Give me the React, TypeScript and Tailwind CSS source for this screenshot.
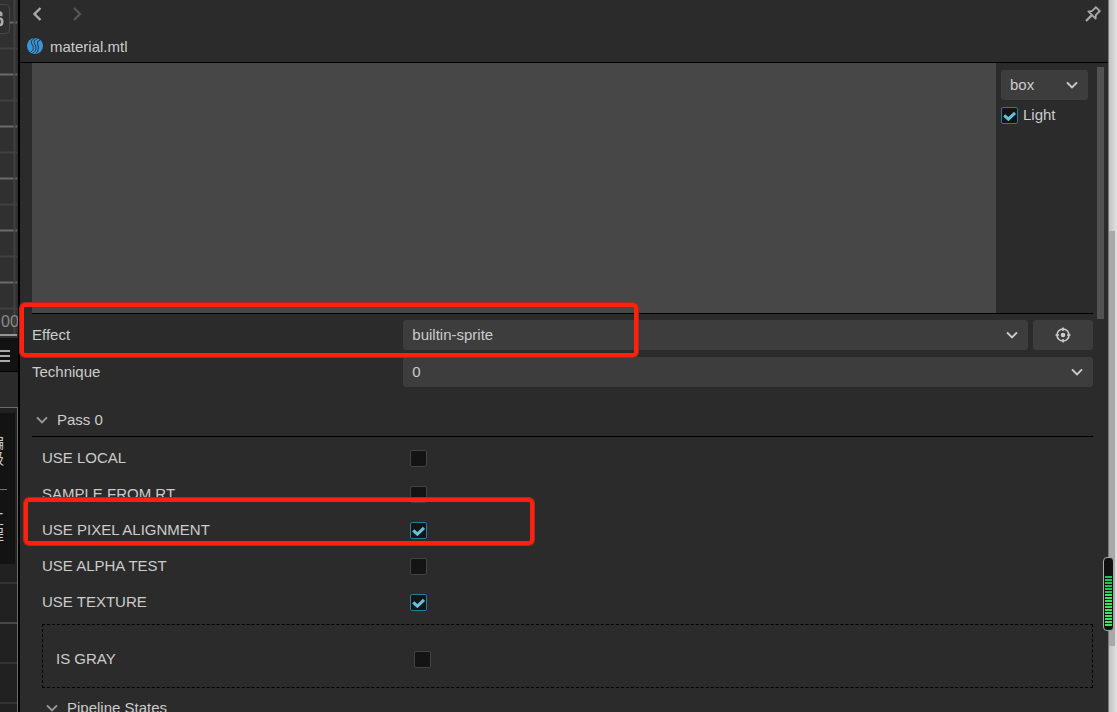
import type { ReactNode } from "react";

const outline =
  "absolute pointer-events-none border-4 border-[#ff2010] rounded-[5px] shadow-[0_0_0_1px_#a8281d]";

function Chevron({ className = "" }: { className?: string }) {
  return (
    <svg viewBox="0 0 12 8" className={`w-3 h-2 shrink-0 fill-none ${className}`} stroke="currentColor" strokeWidth="2">
      <path d="M1 1.4 6 6.4 11 1.4" />
    </svg>
  );
}

function CheckBox({ id, checked = false }: { id: string; checked?: boolean }) {
  return (
    <span className="relative flex w-[17px] h-[17px] shrink-0">
      <input
        id={id}
        type="checkbox"
        defaultChecked={checked}
        className="peer appearance-none w-full h-full rounded-xs border border-[#434343] bg-[#141414] checked:border-[#227f9b]"
      />
      <svg
        viewBox="0 0 17 17"
        className="absolute inset-0 hidden peer-checked:block pointer-events-none fill-none"
        stroke="#67bfdc"
        strokeWidth="3"
      >
        <path d="M3.2 8.4 7.4 12.2 14 5.8" />
      </svg>
    </span>
  );
}

function Select({ id, value, label, className = "" }: { id: string; value: string; label?: string; className?: string }) {
  return (
    <div className={`relative flex items-center ${className}`}>
      <select
        id={id}
        aria-label={label}
        className="appearance-none w-full h-[30px] rounded-[3px] bg-[#3d3d3d] pl-[9px] pr-8 text-[#ccc]"
      >
        <option>{value}</option>
      </select>
      <Chevron className="absolute right-[10px] pointer-events-none text-[#ccc]" />
    </div>
  );
}

function Row({ id, label, children }: { id: string; label: string; children: ReactNode }) {
  return (
    <div className="flex items-center">
      <label htmlFor={id} className="w-[35%] shrink-0">{label}</label>
      {children}
    </div>
  );
}

// Edge of the scene and timeline panels left of the inspector
function SceneEdge() {
  return (
    <aside className="flex flex-col w-5 shrink-0 h-full overflow-hidden border-r-2 border-black bg-[#2b2b2b]">
      <div className="relative h-[338px] shrink-0 bg-[#303030]">
        <svg className="w-full h-full" aria-hidden="true">
          {[48, 100, 152, 204, 256, 308].map((y) => (
            <path key={y} d={`M0 ${y + 0.5}H17`} stroke="#414141" strokeWidth="2" />
          ))}
          {[22, 74, 126, 178, 230, 282].map((y) => (
            <path key={y} d={`M0 ${y + 0.5}H17`} stroke="#6b6b6b" strokeWidth="2" />
          ))}
          <path d="M14.5 0V336" stroke="#414141" strokeWidth="2" />
          <path d="M0 335H17" stroke="#969696" strokeWidth="2" />
          <rect x="-20" y="4.5" width="29.5" height="29" rx="4" fill="#2e2e2e" stroke="#484848" />
          <path d="M-3 12.5H0C1.5 13 1.5 14.500 1 16M-4 18.5H0C3 18.5 3 25 0 25H-4" stroke="#aaa" strokeWidth="2.6" fill="none" />
        </svg>
        <span className="absolute left-px top-[312px] text-base leading-5 text-[#8a8a8a]">00</span>
      </div>
      <div className="flex items-center h-[34px] shrink-0 bg-[#121212] border-b border-black">
        <svg viewBox="0 0 18 14" className="w-[18px] h-[14px]" stroke="#aaa" strokeWidth="2">
          <path d="M0 3H10M0 8H10M0 13H10" />
        </svg>
      </div>
      <div className="grow mt-[35px] border-t border-r border-[#6b6b6b] bg-[#212121]">
        <div className="flex flex-col mt-[5px] mr-0.5 h-[151px] overflow-hidden bg-[#131313] font-['Liberation_Sans','Noto_Sans_CJK_SC',sans-serif] text-[15px] leading-4 text-[#ccc]">
          <div className="flex flex-col justify-center h-[76px] -ml-[11px] w-[15px]">
            <span>编</span>
            <span>级</span>
          </div>
          <div className="w-[7px] border-t border-[#777]" />
          <div className="flex flex-col justify-center h-[74px] -ml-[11px] w-[15px]">
            <span>工</span>
            <span>程</span>
          </div>
        </div>
        <div className="h-5 border-b-2 border-[#333]" />
        <div className="h-10 border-b-2 border-[#484848]" />
        <div className="h-10 border-b-2 border-[#333]" />
        <div className="h-10 border-b-2 border-[#333]" />
      </div>
    </aside>
  );
}

// Page scrollbar with the level meter floating over it
function PageScroll() {
  return (
    <div className="relative w-[9px] shrink-0 h-full border-l border-[#777] bg-linear-to-r from-[#c2c2c2] to-[#e2e2e2]">
      <div className="mt-[231px] w-1.5 h-[415px] bg-[#a9a9a9]" />
      <div className="absolute -left-[6px] top-[557px] w-[11px] h-[74px] rounded-[4px] border border-[#aaa] bg-[#111] px-px pt-[18px] pb-0.5">
        <svg viewBox="0 0 8 52" preserveAspectRatio="none" className="w-full h-full">
          {Array.from({ length: 17 }, (_, i) => (
            <rect key={i} y={i * 3} width="8" height="2" fill={i < 6 ? "#19c75c" : "#3fe25e"} />
          ))}
        </svg>
      </div>
    </div>
  );
}

const flags = [
  { id: "local", label: "USE LOCAL", checked: false },
  { id: "sample", label: "SAMPLE FROM RT", checked: false },
  { id: "pixel", label: "USE PIXEL ALIGNMENT", checked: true },
  { id: "alpha", label: "USE ALPHA TEST", checked: false },
  { id: "texture", label: "USE TEXTURE", checked: true },
];

export default function App() {
  return (
    <div className="relative flex h-screen overflow-hidden bg-[#2b2b2b] font-['Liberation_Sans',Arial,sans-serif] text-[15px] leading-5 text-[#ccc]">
      <SceneEdge />

      <main className="flex flex-col grow min-w-0">
        {/* Header */}
        <header className="h-[63px] shrink-0 border-b border-black">
          <div className="flex items-center h-7 pl-3 pr-[7px]">
            <button aria-label="Back" className="flex w-[38px] text-[#aaa]">
              <svg viewBox="0 0 10 14" className="w-[10px] h-[14px] fill-none" stroke="currentColor" strokeWidth="2.4">
                <path d="M8.5 1 2.5 7 8.5 13" />
              </svg>
            </button>
            <button aria-label="Forward" className="flex text-[#555]">
              <svg viewBox="0 0 14 14" className="w-[14px] h-[14px] fill-none" stroke="currentColor" strokeWidth="2.4">
                <path d="M4 1 10 7 4 13" />
              </svg>
            </button>
            <button aria-label="Lock" className="ml-auto text-[#aaa]">
              <svg viewBox="0 0 16 16" className="w-4 h-4 fill-none" stroke="currentColor" strokeWidth="1.8" strokeLinejoin="round">
                <path d="M10.8 1.2 14.8 5.2 13.6 6.2 10.8 9.2 10.6 12.6 3.4 5.4 6.8 5.2 9.8 2.4Z" />
                <path d="M6.6 9.4 1 15" strokeWidth="2.2" />
              </svg>
            </button>
          </div>
          <div className="flex items-center gap-[7px] h-9 pl-[7px]">
            <svg viewBox="0 0 16 16" className="w-4 h-4">
              <circle cx="8" cy="8" r="8" fill="#3498db" />
              <path
                d="M7.5 .5C4 2 3.5 4.5 5.5 7 7 9.5 6.5 12 4 14M10.5 .5C6.5 2.5 6.5 4.5 8.3 7 9.8 9.5 9 13 5.5 15.5M13 2C10.5 3 9.8 4.5 11 7 12 10 11 13.5 9 15.5"
                fill="none"
                stroke="#2b2b2b"
                strokeWidth="1"
              />
            </svg>
            <h1 className="pt-px">material.mtl</h1>
          </div>
        </header>

        <div className="flex grow min-h-0">
          <div className="grow min-w-0 pl-3 pr-[3px]">
            {/* Preview */}
            <section className="flex h-[251px] border-b border-black">
              <div className="grow bg-[#474747]" />
              <div className="w-[97px] shrink-0 pl-[5px] pt-[7px]">
                <Select id="model" label="Preview model" value="box" className="w-[87px]" />
                <div className="flex items-center gap-[5px] mt-[5px]">
                  <CheckBox id="light" checked />
                  <label htmlFor="light">Light</label>
                </div>
              </div>
            </section>

            <section className="flex flex-col gap-[7px] pt-[6px]">
              <Row id="effect" label="Effect">
                <Select id="effect" value="builtin-sprite" className="grow" />
                <button aria-label="Locate effect" className="flex items-center justify-center w-[60px] h-[30px] ml-[5px] rounded-[3px] bg-[#3d3d3d]">
                  <svg viewBox="0 0 16 16" className="w-4 h-4 fill-none" stroke="#ccc" strokeWidth="1.6">
                    <circle cx="8" cy="8" r="6" />
                    <circle cx="8" cy="8" r="2.3" fill="#ccc" stroke="none" />
                    <path d="M8 .5V4M8 12V15.5M.5 8H4M12 8H15.5" />
                  </svg>
                </button>
              </Row>
              <Row id="technique" label="Technique">
                <Select id="technique" value="0" className="grow" />
              </Row>
            </section>

            {/* Pass */}
            <button className="flex items-center gap-[9px] w-full h-[34px] mt-4 pl-1 border-b border-black">
              <Chevron className="text-[#999]" />
              Pass 0
            </button>
            <section className="pl-[10px]">
              <div className="flex flex-col gap-4 pt-[11px]">
                {flags.map((flag) => (
                  <Row key={flag.id} id={flag.id} label={flag.label}>
                    <CheckBox id={flag.id} checked={flag.checked} />
                  </Row>
                ))}
              </div>
              <div className="mt-3 pl-[13px] pr-3 pt-6 pb-[18px] border border-dashed border-black">
                <Row id="gray" label="IS GRAY">
                  <CheckBox id="gray" />
                </Row>
              </div>
              <button className="flex items-center gap-[9px] h-6 mt-2 pl-1">
                <Chevron className="text-[#999]" />
                Pipeline States
              </button>
            </section>
          </div>
          <div className="w-3 shrink-0 pt-1 pl-px">
            <div className="w-[7px] h-[252px] bg-[#535353]" />
          </div>
        </div>
      </main>

      <PageScroll />

      {/* Highlights */}
      <div className={`${outline} left-5 top-[303px] w-[618px] h-[54px]`} />
      <div className={`${outline} left-6 top-[498px] w-[510px] h-[47px]`} />
    </div>
  );
}
